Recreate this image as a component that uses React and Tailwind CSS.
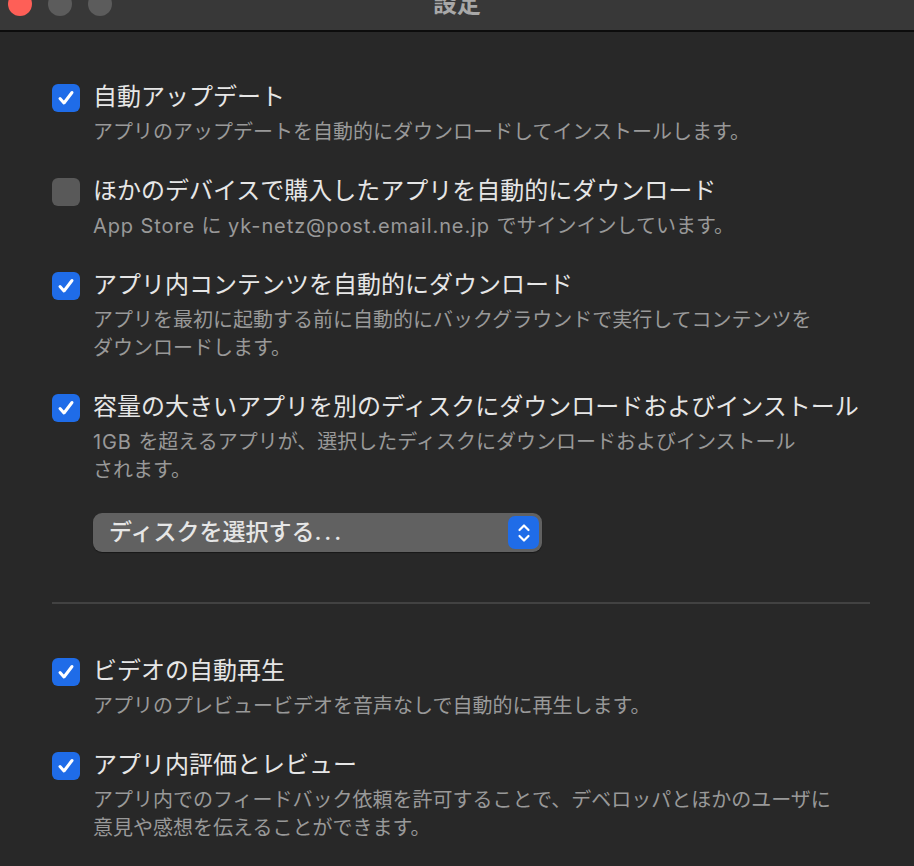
const FONT = { fontFamily: 'Inter, "Noto Sans CJK JP", "Noto Sans", sans-serif' };

function Checkbox({ checked }) {
  if (!checked) {
    return <div className="mt-[2px] h-[28px] w-[28px] shrink-0 rounded-[6px] bg-[#595959]" />;
  }
  return (
    <div className="mt-[2px] flex h-[28px] w-[28px] shrink-0 items-center justify-center rounded-[6px] bg-[#1f6ce8]">
      <svg width="18" height="18" viewBox="0 0 18 18" fill="none">
        <path d="M3 9.5 L7 14 L15 3.5" stroke="white" strokeWidth="3" strokeLinecap="round" strokeLinejoin="round" />
      </svg>
    </div>
  );
}

function Option({ checked, title, lines, children }) {
  return (
    <div className="flex gap-[13px]">
      <Checkbox checked={checked} />
      <div className="flex flex-col">
        <div className="text-[24px] leading-[30px] text-[#e6e6e6]">{title}</div>
        <div className="mt-[6px] text-[20px] leading-[28px] text-[#999999]">
          {lines.map((l, i) => (
            <div key={i}>{l}</div>
          ))}
        </div>
        {children}
      </div>
    </div>
  );
}

export default function App() {
  return (
    <div className="h-[866px] w-[914px] overflow-hidden bg-[#282828]" style={FONT}>
      <div className="relative flex h-[32px] items-start justify-center border-b-2 border-[#0c0c0c] bg-[#383838]">
        <div className="absolute left-[8px] top-[-8px] flex gap-[16px]">
          <div className="h-[24px] w-[24px] rounded-full bg-[#fe5f57]" />
          <div className="h-[24px] w-[24px] rounded-full bg-[#5c5c5c]" />
          <div className="h-[24px] w-[24px] rounded-full bg-[#5c5c5c]" />
        </div>
        <div className="-mt-[11px] text-[24px] font-bold leading-[30px] text-[#a8a8a8]">設定</div>
      </div>

      <div className="flex flex-col px-[52px] pt-[50px]">
        <div className="flex flex-col gap-[30px]">
          <Option checked title="自動アップデート" lines={["アプリのアップデートを自動的にダウンロードしてインストールします。"]} />
          <Option
            title="ほかのデバイスで購入したアプリを自動的にダウンロード"
            lines={[
              <>
                <span className="tracking-[0.9px]">App Store </span>に
                <span className="tracking-[0.9px]"> yk-netz@post.email.ne.jp </span>でサインインしています。
              </>,
            ]}
          />
          <Option
            checked
            title="アプリ内コンテンツを自動的にダウンロード"
            lines={["アプリを最初に起動する前に自動的にバックグラウンドで実行してコンテンツを", "ダウンロードします。"]}
          />
          <Option
            checked
            title="容量の大きいアプリを別のディスクにダウンロードおよびインストール"
            lines={[
              <>
                <span className="tracking-[0.9px]">1GB </span>を超えるアプリが、選択したディスクにダウンロードおよびインストール
              </>,
              "されます。",
            ]}
          >
            <div className="mt-[29px] flex h-[39px] w-[449px] items-center justify-between rounded-[9px] bg-[#616161] pl-[16px] pr-[3px] shadow-[0_1px_1px_rgba(0,0,0,0.4)]">
              <span className="text-[23px] font-medium text-[#e6e6e6]">
                ディスクを選択する<span className="tracking-[3px]">...</span>
              </span>
              <div className="flex h-[33px] w-[31px] items-center justify-center rounded-[7px] bg-[#1f6ce8]">
                <svg width="14" height="22" viewBox="0 0 14 22" fill="none">
                  <path d="M2.5 8 L7 3.5 L11.5 8" stroke="white" strokeWidth="2.2" strokeLinecap="round" strokeLinejoin="round" />
                  <path d="M2.5 14 L7 18.5 L11.5 14" stroke="white" strokeWidth="2.2" strokeLinecap="round" strokeLinejoin="round" />
                </svg>
              </div>
            </div>
          </Option>
        </div>

        <div className="mt-[50px] h-[2px] w-[818px] bg-[#424242]" />

        <div className="mt-[52px] flex flex-col gap-[30px]">
          <Option checked title="ビデオの自動再生" lines={["アプリのプレビュービデオを音声なしで自動的に再生します。"]} />
          <Option
            checked
            title="アプリ内評価とレビュー"
            lines={["アプリ内でのフィードバック依頼を許可することで、デベロッパとほかのユーザに", "意見や感想を伝えることができます。"]}
          />
        </div>
      </div>
    </div>
  );
}
